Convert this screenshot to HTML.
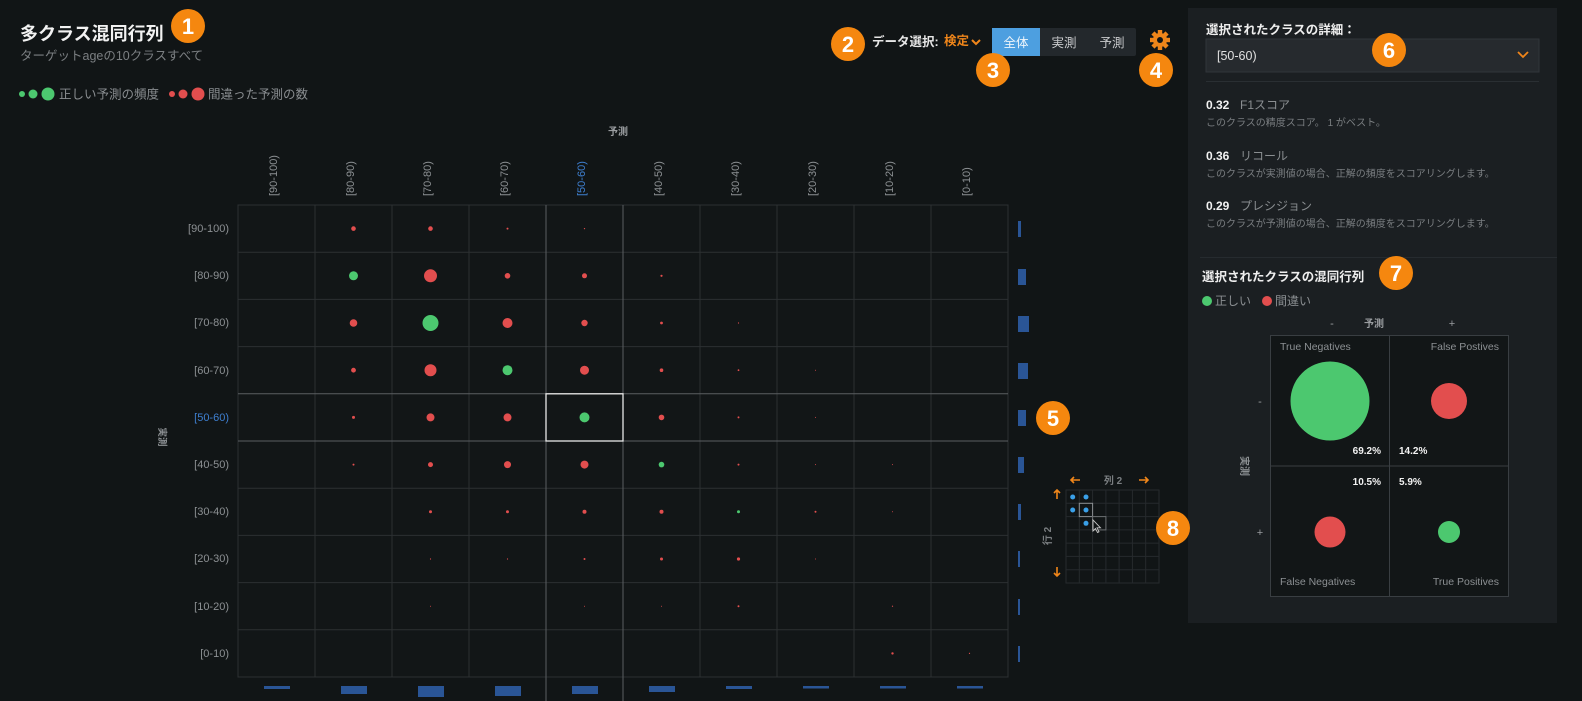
<!DOCTYPE html>
<html><head><meta charset="utf-8"><style>
html,body{margin:0;padding:0;background:#111516;width:1582px;height:701px;overflow:hidden}
svg{display:block}
text{font-family:"Liberation Sans","Noto Sans CJK JP",sans-serif}
</style></head><body>
<svg width="1582" height="701" viewBox="0 0 1582 701" xmlns="http://www.w3.org/2000/svg">
<rect width="1582" height="701" fill="#111516"/>
<!-- title -->
<text x="20" y="40" font-size="18" font-weight="bold" fill="#f2f2f2">多クラス混同行列</text>
<text x="20" y="60" font-size="12.5" fill="#7b7f82">ターゲットageの10クラスすべて</text>
<circle cx="22" cy="94" r="3" fill="#4cc86f"/><circle cx="33" cy="94" r="4.5" fill="#4cc86f"/><circle cx="48" cy="94" r="6.5" fill="#4cc86f"/>
<text x="59" y="98.5" font-size="12.5" fill="#8a8e91">正しい予測の頻度</text>
<circle cx="172" cy="94" r="3" fill="#e24e4e"/><circle cx="183" cy="94" r="4.5" fill="#e24e4e"/><circle cx="198" cy="94" r="6.5" fill="#e24e4e"/>
<text x="208" y="98.5" font-size="12.5" fill="#8a8e91">間違った予測の数</text>

<!-- header controls -->
<text x="872" y="46" font-size="12.5" font-weight="bold" fill="#e6e6e6">データ選択:</text>
<text x="944" y="45" font-size="12.5" font-weight="bold" fill="#f0861a">検定</text>
<path d="M972 40 l4 4 l4 -4" stroke="#f0861a" stroke-width="2" fill="none"/>
<rect x="992" y="28" width="144" height="28" rx="2" fill="#23282c"/>
<rect x="992" y="28" width="48" height="28" fill="#4d9fe0"/>
<text x="1016" y="47" font-size="12.5" fill="#eef5fb" text-anchor="middle">全体</text>
<text x="1064" y="47" font-size="12.5" fill="#c8cacc" text-anchor="middle">実測</text>
<text x="1112" y="47" font-size="12.5" fill="#c8cacc" text-anchor="middle">予測</text>
<!-- gear -->
<g transform="translate(1160,40)" fill="#f0861a">
<circle r="7"/>
<g><rect x="-2.2" y="-10" width="4.4" height="20"/><rect x="-2.2" y="-10" width="4.4" height="20" transform="rotate(45)"/><rect x="-2.2" y="-10" width="4.4" height="20" transform="rotate(90)"/><rect x="-2.2" y="-10" width="4.4" height="20" transform="rotate(135)"/></g>
<circle r="3" fill="#111516"/>
</g>

<!-- matrix -->
<text x="618" y="135" font-size="10" font-weight="bold" fill="#9a9da0" text-anchor="middle">予測</text>
<g font-size="11" fill="#8c9093">
<text transform="translate(277,196) rotate(-90)">[90-100)</text>
<text transform="translate(354,196) rotate(-90)">[80-90)</text>
<text transform="translate(431,196) rotate(-90)">[70-80)</text>
<text transform="translate(508,196) rotate(-90)">[60-70)</text>
<text transform="translate(585,196) rotate(-90)" fill="#3e7fd0">[50-60)</text>
<text transform="translate(662,196) rotate(-90)">[40-50)</text>
<text transform="translate(739,196) rotate(-90)">[30-40)</text>
<text transform="translate(816,196) rotate(-90)">[20-30)</text>
<text transform="translate(893,196) rotate(-90)">[10-20)</text>
<text transform="translate(970,196) rotate(-90)">[0-10)</text>
</g>
<g font-size="11" fill="#8c9093" text-anchor="end">
<text x="229" y="232">[90-100)</text>
<text x="229" y="279">[80-90)</text>
<text x="229" y="326">[70-80)</text>
<text x="229" y="374">[60-70)</text>
<text x="229" y="421" fill="#3e7fd0">[50-60)</text>
<text x="229" y="468">[40-50)</text>
<text x="229" y="515">[30-40)</text>
<text x="229" y="562">[20-30)</text>
<text x="229" y="610">[10-20)</text>
<text x="229" y="657">[0-10)</text>
</g>
<text transform="translate(159,437) rotate(90)" font-size="9.5" font-weight="bold" fill="#8c9093" text-anchor="middle">実測</text>
<g stroke="#2c3032" stroke-width="1">
<rect x="238" y="205" width="770" height="472" fill="#121617"/>
<path d="M315 205V677M392 205V677M469 205V677M700 205V677M777 205V677M854 205V677M931 205V677"/>
<path d="M238 252.2H1008M238 299.4H1008M238 346.6H1008M238 488.2H1008M238 535.4H1008M238 582.6H1008M238 629.8H1008"/>
</g>
<g stroke="#5a5e61" stroke-width="1">
<path d="M546 205V701M623 205V701M238 393.8H1008M238 441H1008"/>
</g>
<rect x="546" y="393.8" width="77" height="47.2" fill="none" stroke="#e8e8e8" stroke-width="1.3"/>
<g fill="#e24e4e">
<circle cx="353.5" cy="228.6" r="2.3"/><circle cx="430.5" cy="228.6" r="2.3"/><circle cx="507.5" cy="228.6" r="1"/><circle cx="584.5" cy="228.6" r="0.6"/>
<circle cx="430.5" cy="275.8" r="6.5"/><circle cx="507.5" cy="275.8" r="2.8"/><circle cx="584.5" cy="275.8" r="2.5"/><circle cx="661.5" cy="275.8" r="1.1"/>
<circle cx="353.5" cy="323" r="3.8"/><circle cx="507.5" cy="323" r="5"/><circle cx="584.5" cy="323" r="3.2"/><circle cx="661.5" cy="323" r="1.4"/><circle cx="738.5" cy="323" r="0.6"/>
<circle cx="353.5" cy="370.2" r="2.4"/><circle cx="430.5" cy="370.2" r="6"/><circle cx="584.5" cy="370.2" r="4.5"/><circle cx="661.5" cy="370.2" r="1.8"/><circle cx="738.5" cy="370.2" r="0.9"/><circle cx="815.5" cy="370.2" r="0.5"/>
<circle cx="353.5" cy="417.4" r="1.5"/><circle cx="430.5" cy="417.4" r="4"/><circle cx="507.5" cy="417.4" r="4"/><circle cx="661.5" cy="417.4" r="2.8"/><circle cx="738.5" cy="417.4" r="1"/><circle cx="815.5" cy="417.4" r="0.5"/>
<circle cx="353.5" cy="464.6" r="1"/><circle cx="430.5" cy="464.6" r="2.5"/><circle cx="507.5" cy="464.6" r="3.5"/><circle cx="584.5" cy="464.6" r="4"/><circle cx="738.5" cy="464.6" r="1"/><circle cx="815.5" cy="464.6" r="0.5"/><circle cx="892.5" cy="464.6" r="0.5"/>
<circle cx="430.5" cy="511.8" r="1.5"/><circle cx="507.5" cy="511.8" r="1.5"/><circle cx="584.5" cy="511.8" r="2"/><circle cx="661.5" cy="511.8" r="2"/><circle cx="815.5" cy="511.8" r="1"/><circle cx="892.5" cy="511.8" r="0.5"/>
<circle cx="430.5" cy="559" r="0.6"/><circle cx="507.5" cy="559" r="0.6"/><circle cx="584.5" cy="559" r="1"/><circle cx="661.5" cy="559" r="1.5"/><circle cx="738.5" cy="559" r="1.6"/><circle cx="815.5" cy="559" r="0.5"/>
<circle cx="430.5" cy="606.2" r="0.5"/><circle cx="584.5" cy="606.2" r="0.5"/><circle cx="661.5" cy="606.2" r="0.5"/><circle cx="738.5" cy="606.2" r="1"/><circle cx="892.5" cy="606.2" r="0.6"/>
<circle cx="892.5" cy="653.4" r="1.2"/><circle cx="969.5" cy="653.4" r="0.6"/>
</g>
<g fill="#4cc86f">
<circle cx="353.5" cy="275.8" r="4.5"/><circle cx="430.5" cy="323" r="8"/><circle cx="507.5" cy="370.2" r="5"/><circle cx="584.5" cy="417.4" r="5"/><circle cx="661.5" cy="464.6" r="2.8"/><circle cx="738.5" cy="511.8" r="1.5"/>
</g>
<g fill="#2a5596">
<rect x="1018" y="221" width="3" height="16"/>
<rect x="1018" y="269" width="8" height="16"/>
<rect x="1018" y="316" width="11" height="16"/>
<rect x="1018" y="363" width="10" height="16"/>
<rect x="1018" y="410" width="8" height="16"/>
<rect x="1018" y="457" width="6" height="16"/>
<rect x="1018" y="504" width="3" height="16"/>
<rect x="1018" y="551" width="2" height="16"/>
<rect x="1018" y="599" width="2" height="16"/>
<rect x="1018" y="646" width="2" height="16"/>
</g>
<g fill="#2a5596">
<rect x="264" y="686" width="26" height="3"/>
<rect x="341" y="686" width="26" height="8"/>
<rect x="418" y="686" width="26" height="11"/>
<rect x="495" y="686" width="26" height="10"/>
<rect x="572" y="686" width="26" height="8"/>
<rect x="649" y="686" width="26" height="6"/>
<rect x="726" y="686" width="26" height="3"/>
<rect x="803" y="686" width="26" height="2.5"/>
<rect x="880" y="686" width="26" height="2.5"/>
<rect x="957" y="686" width="26" height="2.5"/>
</g>

<!-- mini grid -->
<g stroke="#262a2d" stroke-width="1" fill="none">
<rect x="1066" y="490" width="93" height="93"/>
<path d="M1079.3 490V583M1092.6 490V583M1105.9 490V583M1119.1 490V583M1132.4 490V583M1145.7 490V583M1066 503.3H1159M1066 516.6H1159M1066 529.9H1159M1066 543.1H1159M1066 556.4H1159M1066 569.7H1159"/>
</g>
<rect x="1079.3" y="503.3" width="13.3" height="13.3" fill="none" stroke="#8a8e91" stroke-width="1"/>
<rect x="1092.6" y="516.6" width="13.3" height="13.3" fill="none" stroke="#6a6e71" stroke-width="1"/>
<g fill="#3aa0e8"><circle cx="1072.7" cy="497" r="2.5"/><circle cx="1086" cy="497" r="2.5"/><circle cx="1072.7" cy="510" r="2.5"/><circle cx="1086" cy="510" r="2.5"/><circle cx="1086" cy="523.3" r="2.5"/></g>
<path d="M1093 520 l0 11 l2.5 -2.5 l2 4 l1.5 -0.7 l-2 -4 l3.5 0 z" fill="#111516" stroke="#c8c8c8" stroke-width="0.9"/>
<g stroke="#f0861a" stroke-width="1.6" fill="none">
<path d="M1080 480H1071M1074 477l-3 3l3 3"/>
<path d="M1139 480H1148M1145 477l3 3l-3 3"/>
<path d="M1057 499V490M1054 493l3-3l3 3"/>
<path d="M1057 567V576M1054 573l3 3l3-3"/>
</g>
<text x="1113" y="484" font-size="10" font-weight="bold" fill="#7a7e81" text-anchor="middle">列 2</text>
<text transform="translate(1051,536) rotate(-90)" font-size="10" font-weight="bold" fill="#7a7e81" text-anchor="middle">行 2</text>

<!-- right panel -->
<rect x="1188" y="8" width="369" height="615" fill="#1b1f22"/>
<text x="1206" y="34" font-size="12.5" font-weight="bold" fill="#eeeeee">選択されたクラスの詳細：</text>
<rect x="1206" y="39" width="333" height="33" fill="#262a2e" stroke="#30353a"/>
<text x="1217" y="60" font-size="12.5" fill="#e0e0e0">[50-60)</text>
<path d="M1518 52 l5 5 l5 -5" stroke="#f0861a" stroke-width="1.8" fill="none"/>
<rect x="1206" y="81" width="333" height="1" fill="#2a2f33"/>
<text x="1206" y="109" font-size="12" font-weight="bold" fill="#f2f2f2">0.32</text>
<text x="1240" y="109" font-size="12" fill="#8a8e91">F1スコア</text>
<text x="1206" y="126" font-size="10" fill="#7a7e81">このクラスの精度スコア。 1 がベスト。</text>
<text x="1206" y="160" font-size="12" font-weight="bold" fill="#f2f2f2">0.36</text>
<text x="1240" y="160" font-size="12" fill="#8a8e91">リコール</text>
<text x="1206" y="177" font-size="10" fill="#7a7e81">このクラスが実測値の場合、正解の頻度をスコアリングします。</text>
<text x="1206" y="210" font-size="12" font-weight="bold" fill="#f2f2f2">0.29</text>
<text x="1240" y="210" font-size="12" fill="#8a8e91">プレシジョン</text>
<text x="1206" y="227" font-size="10" fill="#7a7e81">このクラスが予測値の場合、正解の頻度をスコアリングします。</text>
<rect x="1200" y="257" width="357" height="1" fill="#262b2f"/>
<text x="1202" y="281" font-size="12.5" font-weight="bold" fill="#eeeeee">選択されたクラスの混同行列</text>
<circle cx="1207" cy="301" r="5" fill="#4cc86f"/>
<text x="1215" y="305" font-size="12" fill="#8a8e91">正しい</text>
<circle cx="1267" cy="301" r="5" fill="#e24e4e"/>
<text x="1275" y="305" font-size="12" fill="#8a8e91">間違い</text>
<text x="1332" y="327" font-size="11" fill="#9a9da0" text-anchor="middle">-</text>
<text x="1374" y="327" font-size="10" font-weight="bold" fill="#9a9da0" text-anchor="middle">予測</text>
<text x="1452" y="327" font-size="11" fill="#9a9da0" text-anchor="middle">+</text>
<rect x="1270.5" y="335.5" width="238" height="261" fill="#121617" stroke="#393e42"/>
<path d="M1389.5 336V597M1271 466H1508" stroke="#393e42"/>
<text x="1260" y="405" font-size="11" fill="#9a9da0" text-anchor="middle">-</text>
<text x="1260" y="536" font-size="11" fill="#9a9da0" text-anchor="middle">+</text>
<text transform="translate(1241,466) rotate(90)" font-size="10" font-weight="bold" fill="#8c9093" text-anchor="middle">実測</text>
<g font-size="10.5" fill="#8c9093">
<text x="1280" y="350">True Negatives</text>
<text x="1499" y="350" text-anchor="end">False Postives</text>
<text x="1280" y="585">False Negatives</text>
<text x="1499" y="585" text-anchor="end">True Positives</text>
</g>
<circle cx="1330" cy="401" r="39.5" fill="#4cc86f"/>
<circle cx="1449" cy="401" r="18" fill="#e24e4e"/>
<circle cx="1330" cy="532" r="15.5" fill="#e24e4e"/>
<circle cx="1449" cy="532" r="11" fill="#4cc86f"/>
<g font-size="10" font-weight="bold" fill="#f2f2f2">
<text x="1381" y="454" text-anchor="end">69.2%</text>
<text x="1399" y="454">14.2%</text>
<text x="1381" y="485" text-anchor="end">10.5%</text>
<text x="1399" y="485">5.9%</text>
</g>

<!-- badges -->
<g font-size="22" font-weight="bold" fill="#fff" text-anchor="middle">
<circle cx="188" cy="26" r="17" fill="#f5870f"/><text x="188" y="34">1</text>
<circle cx="848" cy="44" r="17" fill="#f5870f"/><text x="848" y="52">2</text>
<circle cx="993" cy="70" r="17" fill="#f5870f"/><text x="993" y="78">3</text>
<circle cx="1156" cy="70" r="17" fill="#f5870f"/><text x="1156" y="78">4</text>
<circle cx="1053" cy="418" r="17" fill="#f5870f"/><text x="1053" y="426">5</text>
<circle cx="1389" cy="50" r="17" fill="#f5870f"/><text x="1389" y="58">6</text>
<circle cx="1396" cy="273" r="17" fill="#f5870f"/><text x="1396" y="281">7</text>
<circle cx="1173" cy="528" r="17" fill="#f5870f"/><text x="1173" y="536">8</text>
</g>
</svg>
</body></html>
